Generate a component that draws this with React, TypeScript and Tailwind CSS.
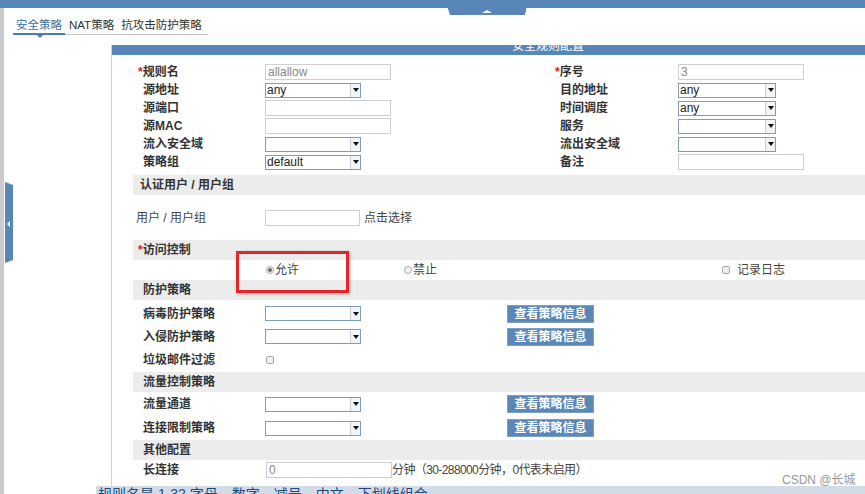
import React from "react";

const Select = ({ value = "", className = "w-[96px]" }: { value?: string; className?: string }) => (
  <div className={`flex h-[15px] items-stretch border border-[#7f9db9] bg-white ${className}`}>
    <span className="flex-1 pl-[1px] text-[12px] leading-[13px] font-normal text-[#222]">{value}</span>
    <span className="flex w-[10px] items-center justify-center border-l border-[#c3cfdd] bg-[#f1f4f8]">
      <span className="h-0 w-0 border-x-[3px] border-t-[4px] border-x-transparent border-t-[#111]" />
    </span>
  </div>
);

const TextInput = ({ value = "", className = "w-[126px]" }: { value?: string; className?: string }) => (
  <div
    className={`h-[16px] border border-[#cfcfcf] bg-white pl-[2px] text-[12px] leading-[14px] font-normal text-[#888] ${className}`}
  >
    {value}
  </div>
);

const Star = () => <span className="-ml-[5px] text-[#e02020]">*</span>;

const TopRow = ({
  label,
  field,
  rlabel,
  rfield,
  star,
  rstar,
}: {
  label: string;
  field: React.ReactNode;
  rlabel: string;
  rfield: React.ReactNode;
  star?: boolean;
  rstar?: boolean;
}) => (
  <div className="flex h-[18px] items-center">
    <div className="w-[122px] text-[12px] font-bold text-[#333]">
      {star && <Star />}
      {label}
    </div>
    <div className="w-[295px]">{field}</div>
    <div className="w-[118px] text-[12px] font-bold text-[#333]">
      {rstar && <Star />}
      {rlabel}
    </div>
    <div>{rfield}</div>
  </div>
);

const Band = ({ children, pad = "pl-[10px]" }: { children: React.ReactNode; pad?: string }) => (
  <div className={`ml-[21px] flex h-[20px] items-center bg-[#ececec] text-[12px] font-bold text-[#333] ${pad}`}>
    {children}
  </div>
);

const InfoButton = () => (
  <div className="flex h-[18px] w-[87px] items-center justify-center border border-[#7ea0c6] bg-[#5b87b6] text-[12px] font-bold text-white">
    查看策略信息
  </div>
);

const PolicyRow = ({ label, h = "h-[23px]", button = true }: { label: string; h?: string; button?: boolean }) => (
  <div className={`flex items-center ${h}`}>
    <div className="w-[122px] text-[12px] font-bold text-[#333]">{label}</div>
    <div className="w-[242px]">
      <Select />
    </div>
    {button && <InfoButton />}
  </div>
);

export default function App() {
  return (
    <div className="relative h-[494px] w-[865px] overflow-hidden bg-white font-['Liberation_Sans','Noto_Sans_CJK_SC',sans-serif]">
      {/* top bar */}
      <div className="h-[8px] bg-[#5886b6]" />
      <svg className="absolute left-[445px] top-0" width="83" height="15" viewBox="0 0 83 15">
        <polygon points="0,0 83,0 80,15 5,15" fill="#5886b6" />
        <polygon points="37,13 42,10 47,13" fill="#fff" />
      </svg>

      <div className="flex h-[486px]">
        <div className="w-[4px] bg-[#cbcbcb]" />
        <div className="flex flex-1 flex-col">
          {/* tabs */}
          <div className="relative mt-[9px] ml-[9px] flex h-[18px] w-[195px] items-center gap-[7px] border-b border-[#c4c4c4] pl-[3px] text-[11.5px]">
            <span className="text-[#3b70a8]">安全策略</span>
            <span className="text-[#333]">NAT策略</span>
            <span className="text-[#333]">抗攻击防护策略</span>
            <span className="absolute -bottom-[1px] left-0 h-[2px] w-[52px] bg-[#4a7db3]" />
            <span className="absolute -bottom-[4px] left-[24px] h-0 w-0 border-x-[3px] border-t-[3px] border-x-transparent border-t-[#4a7db3]" />
          </div>

          {/* panel */}
          <div className="mt-[10px] ml-[107px] flex flex-1 flex-col border-l border-[#d0d0d0]">
            <div className="h-[10px] overflow-hidden bg-[#5886b6]">
              <div className="-mt-[6px] pl-[400px] text-[12px] leading-[14px] text-white">安全规则配置</div>
            </div>

            <div className="mt-[8px] pl-[31px]">
              <TopRow
                star
                label="规则名"
                field={<TextInput value="allallow" />}
                rstar
                rlabel="序号"
                rfield={<TextInput value="3" />}
              />
              <TopRow
                label="源地址"
                field={<Select value="any" />}
                rlabel="目的地址"
                rfield={<Select value="any" className="w-[98px]" />}
              />
              <TopRow
                label="源端口"
                field={<TextInput />}
                rlabel="时间调度"
                rfield={<Select value="any" className="w-[98px]" />}
              />
              <TopRow
                label="源MAC"
                field={<TextInput />}
                rlabel="服务"
                rfield={<Select className="w-[98px]" />}
              />
              <TopRow
                label="流入安全域"
                field={<Select />}
                rlabel="流出安全域"
                rfield={<Select className="w-[98px]" />}
              />
              <TopRow
                label="策略组"
                field={<Select value="default" />}
                rlabel="备注"
                rfield={<TextInput />}
              />
            </div>

            <div className="mt-[4px]">
              <Band pad="pl-[7px]">认证用户 / 用户组</Band>
            </div>
            <div className="flex h-[45px] items-center pl-[24px] text-[12px] text-[#444]">
              <div className="w-[129px]">用户 / 用户组</div>
              <TextInput className="w-[95px]" />
              <span className="ml-[4px]">点击选择</span>
            </div>

            <Band pad="pl-[10px]">
              <Star />
              访问控制
            </Band>
            <div className="flex h-[20px] items-center pl-[154px] text-[12px] text-[#444]">
              <div className="flex w-[138px] items-center gap-[1px]">
                <span className="flex h-[8px] w-[8px] items-center justify-center rounded-full border border-[#aaa] bg-[#f3f3f3]">
                  <span className="h-[4px] w-[4px] rounded-full bg-[#666]" />
                </span>
                允许
              </div>
              <div className="flex w-[318px] items-center gap-[1px]">
                <span className="h-[8px] w-[8px] rounded-full border border-[#aaa] bg-[#f3f3f3]" />
                禁止
              </div>
              <div className="flex items-center gap-[7px]">
                <span className="h-[8px] w-[8px] rounded-[2px] border border-[#aaa] bg-[#eee]" />
                记录日志
              </div>
            </div>

            <Band>防护策略</Band>
            <div className="pt-[2px] pb-[1px] pl-[31px]">
              <PolicyRow label="病毒防护策略" />
              <PolicyRow label="入侵防护策略" />
              <div className="flex h-[23px] items-center">
                <div className="w-[123px] text-[12px] font-bold text-[#333]">垃圾邮件过滤</div>
                <span className="h-[8px] w-[8px] rounded-[2px] border border-[#aaa] bg-[#eee]" />
              </div>
            </div>

            <Band>流量控制策略</Band>
            <div className="pl-[31px]">
              <PolicyRow label="流量通道" h="h-[24px]" />
              <PolicyRow label="连接限制策略" h="h-[24px]" />
            </div>

            <Band>其他配置</Band>
            <div className="flex h-[20px] items-center pl-[31px] text-[12px] text-[#444]">
              <div className="w-[123px] font-bold text-[#333]">长连接</div>
              <TextInput value="0" className="w-[126px]" />
              <span className="tracking-[-0.6px]">分钟（30-288000分钟，0代表未启用）</span>
            </div>
          </div>
        </div>
      </div>

      {/* bottom bar */}
      <div className="absolute left-[96px] top-[486px] h-[8px] w-[769px] overflow-hidden bg-[#d3dce6]">
        <div className="pl-[2px] text-[14px] leading-[16px] text-[#1d4a80]">规则名是 1-32 字母、数字、减号、中文、下划线组合</div>
      </div>

      {/* side handle */}
      <svg className="absolute left-[5px] top-[182px]" width="8" height="82" viewBox="0 0 8 82">
        <polygon points="0,0 8,3 8,78 0,81" fill="#5886b6" />
        <polygon points="2,42 5,39 5,45" fill="#fff" />
      </svg>

      {/* highlight */}
      <div className="absolute left-[236px] top-[251px] h-[42px] w-[113px] border-[3px] border-[#e3262a] shadow-[1px_1px_3px_rgba(0,0,0,0.35)]" />

      <div className="absolute left-[782px] top-[471px] text-[12px] text-[#999]">CSDN @长城</div>
    </div>
  );
}
